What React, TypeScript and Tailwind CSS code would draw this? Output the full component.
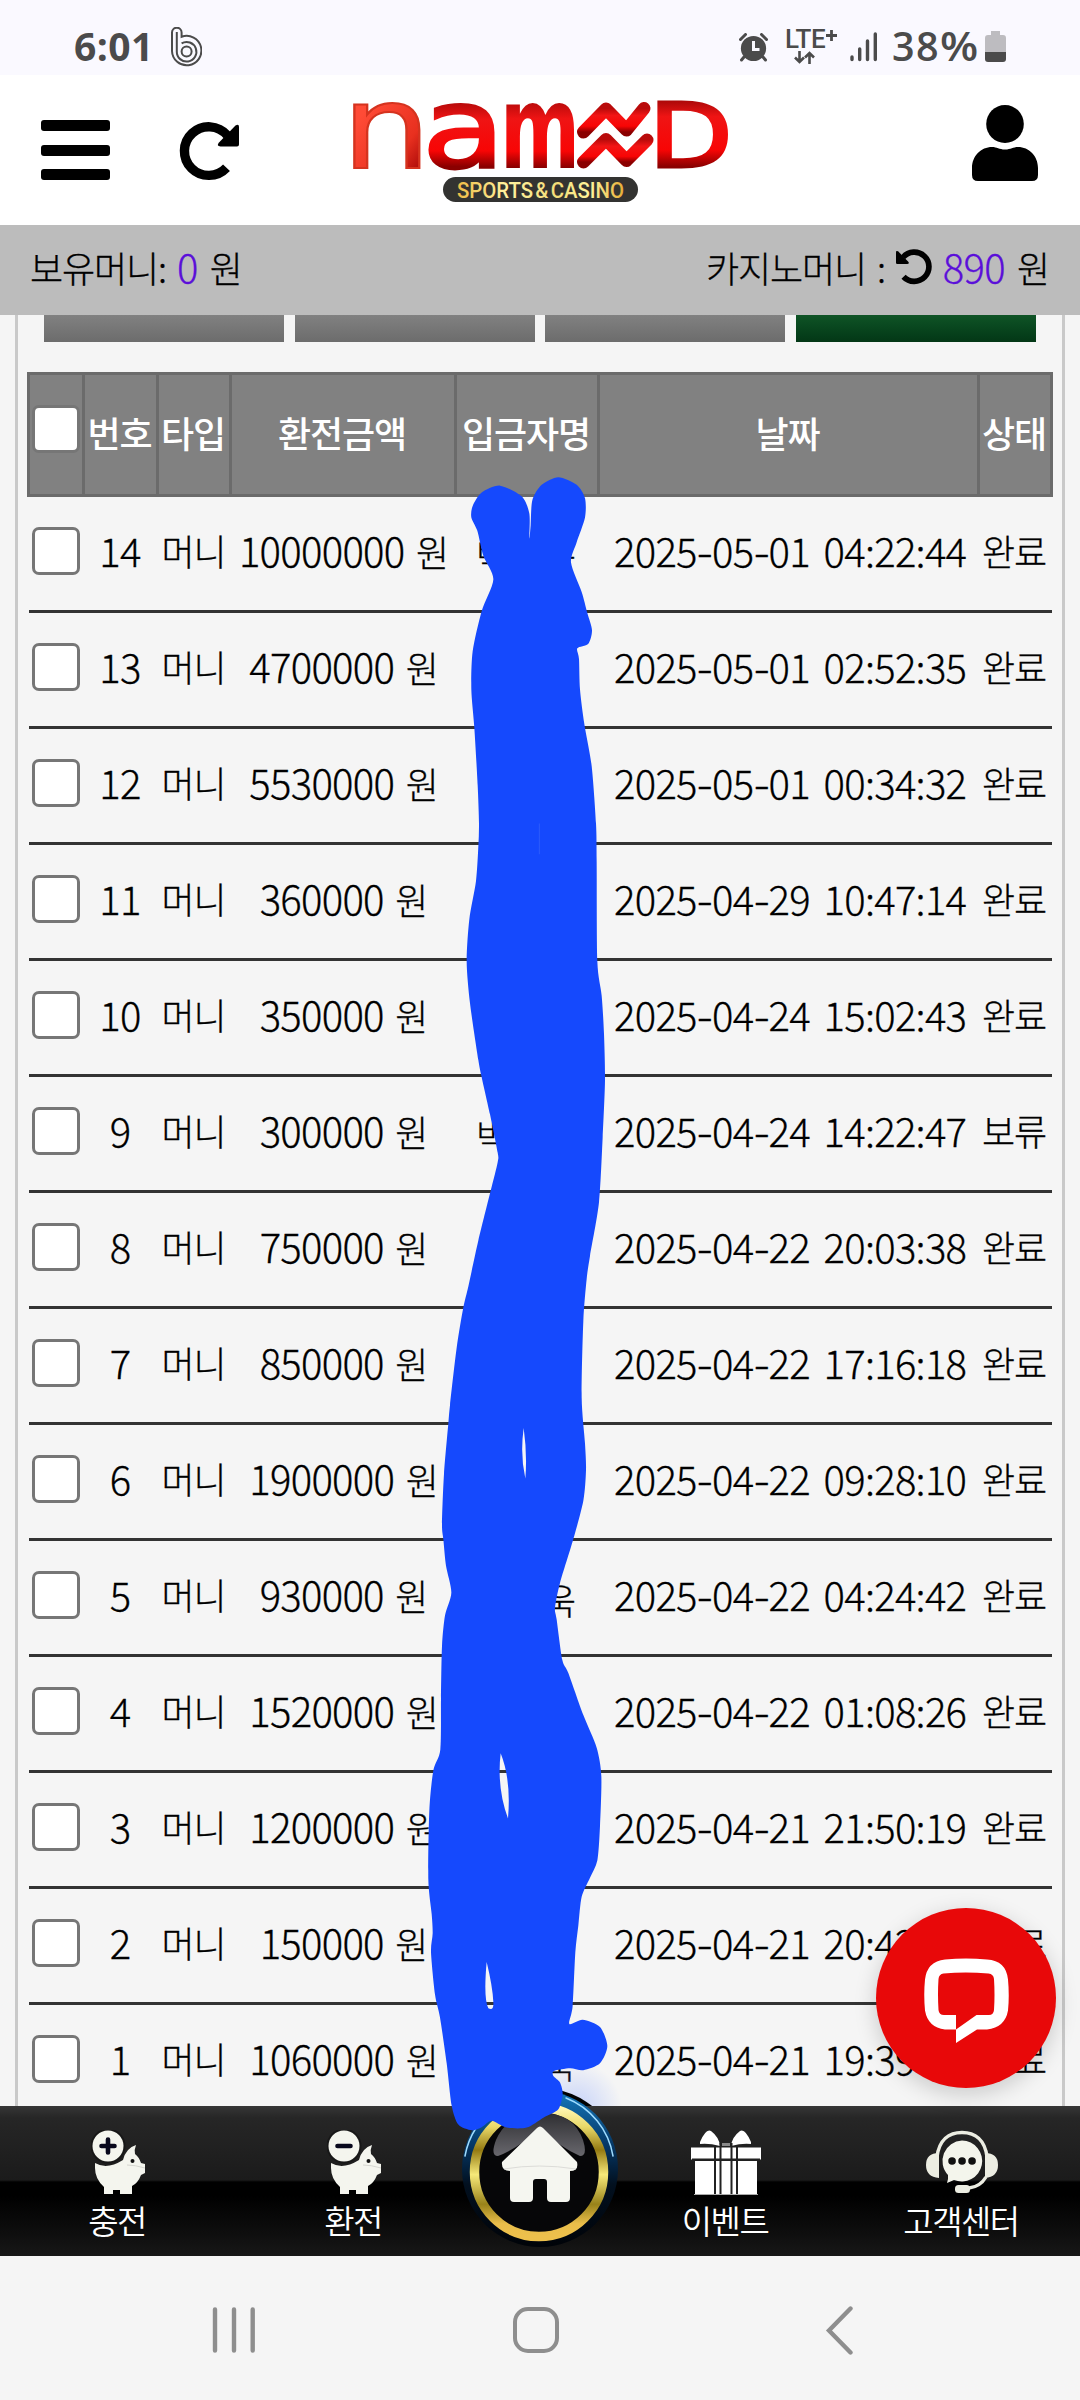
import React from "react";

const KR = "font-['Noto_Sans_CJK_KR',sans-serif]";

type Row = { no: number; amount: string; date: string; status: string; name?: boolean };

const rows: Row[] = [
  { no: 14, amount: "10000000", date: "2025-05-01 04:22:44", status: "완료", name: true },
  { no: 13, amount: "4700000", date: "2025-05-01 02:52:35", status: "완료" },
  { no: 12, amount: "5530000", date: "2025-05-01 00:34:32", status: "완료" },
  { no: 11, amount: "360000", date: "2025-04-29 10:47:14", status: "완료" },
  { no: 10, amount: "350000", date: "2025-04-24 15:02:43", status: "완료" },
  { no: 9, amount: "300000", date: "2025-04-24 14:22:47", status: "보류", name: true },
  { no: 8, amount: "750000", date: "2025-04-22 20:03:38", status: "완료" },
  { no: 7, amount: "850000", date: "2025-04-22 17:16:18", status: "완료" },
  { no: 6, amount: "1900000", date: "2025-04-22 09:28:10", status: "완료" },
  { no: 5, amount: "930000", date: "2025-04-22 04:24:42", status: "완료", name: true },
  { no: 4, amount: "1520000", date: "2025-04-22 01:08:26", status: "완료" },
  { no: 3, amount: "1200000", date: "2025-04-21 21:50:19", status: "완료" },
  { no: 2, amount: "150000", date: "2025-04-21 20:42", status: "완료" },
  { no: 1, amount: "1060000", date: "2025-04-21 19:39", status: "완료", name: true },
];

function Num({ children, className = "" }: { children: React.ReactNode; className?: string }) {
  return <span className={`text-[40px] tracking-[-0.7px] ${className}`}>{children}</span>;
}

function Ko({ children, className = "" }: { children: React.ReactNode; className?: string }) {
  return <span className={`text-[36px] tracking-[-1.1px] ${className}`}>{children}</span>;
}

// Dates have wide hyphens and a wide gap before the time.
function Stamp({ value }: { value: string }) {
  return (
    <Num className="[word-spacing:5.500px]">
      {value.split(/(-)/).map((part, i) =>
        part === "-" ? (
          <span key={i} className="mr-[1px] ml-[1.500px] inline-block origin-center scale-x-[1.2]">-</span>
        ) : (
          part
        ),
      )}
    </Num>
  );
}

function StatusBar() {
  return (
    <div className="flex h-[75px] items-start bg-[#faf9ff] pl-[74px] pr-[74px] pt-[26px] text-[#4b4b4b]">
      <span className="h-[40px] w-[80px] whitespace-nowrap font-['Open_Sans',sans-serif] text-[39px] font-bold leading-[40px] tracking-[0.4px]">6:01</span>
      <svg className="ml-[17px] mt-px" width="31" height="40" viewBox="0 0 31 40" fill="none" stroke="#4b4b4b" strokeWidth="2">
        <path d="M1 5.500a4.800 4.800 0 0 1 9.600 0v4.300A14.700 14.700 0 1 1 1 24Z" />
        <path d="M5.800 5v19.500a9.800 9.800 0 1 0 4.800-8.200" />
        <circle cx="15.600" cy="24.500" r="5" />
      </svg>
      <div className="ml-auto flex items-start">
        <svg className="mt-[7px]" width="29" height="29" viewBox="0 0 29 29">
          <circle cx="14.500" cy="15.500" r="12.600" fill="#4b4b4b" />
          <path d="M1.500 6.500 6.500 1.500M27.500 6.500l-5-5M5 24l-2.500 3M24 24l2.500 3" stroke="#4b4b4b" strokeWidth="3" strokeLinecap="round" />
          <path d="M14.500 8v8.500h6" fill="none" stroke="#faf9ff" strokeWidth="3" />
        </svg>
        <div className="ml-[17px] flex w-[56px] flex-col">
          <div className="flex h-[25px] items-start whitespace-nowrap font-['Roboto',sans-serif] font-medium">
            <span className="text-[26px] leading-[26px] tracking-[-0.4px]">LTE</span>
            <svg className="mt-[3px]" width="13" height="13" viewBox="0 0 13 13"><path d="M6.500 1v11M1 6.500h11" stroke="#4b4b4b" strokeWidth="2.800" /></svg>
          </div>
          <svg className="ml-[9px]" width="21" height="13" viewBox="0 0 21 13" fill="none" stroke="#4b4b4b" strokeWidth="2.600">
            <path d="M5.500 0v11M1 6.500l4.500 4.500L10 6.500M15.500 13V2M11 6.500 15.500 2l4.500 4.500" />
          </svg>
        </div>
        <svg className="ml-[9px] mt-[6px]" width="28" height="30" viewBox="0 0 28 30" stroke="#4b4b4b" strokeWidth="3.400" strokeLinecap="round">
          <path d="M2 25v2.500M9.700 17v10.500M17.500 9v18.500M25.300 2v25.500" />
        </svg>
        <span className="ml-[14px] h-[40px] w-[89px] whitespace-nowrap font-['Open_Sans',sans-serif] text-[39.500px] font-semibold leading-[40px] tracking-[1.500px]">
          38<span className="inline-block origin-left scale-x-[1.12]">%</span>
        </span>
        <svg className="ml-[4px] mt-[5px]" width="21" height="32" viewBox="0 0 21 32">
          <path d="M6 0h9v4h3a3 3 0 0 1 3 3v15H0V7a3 3 0 0 1 3-3h3Z" fill="#bdbcc0" />
          <path d="M0 21h21v7a3 3 0 0 1-3 3H3a3 3 0 0 1-3-3Z" fill="#4b4b4b" />
        </svg>
      </div>
    </div>
  );
}

function RotateIcon({ className = "" }: { className?: string }) {
  return (
    <svg className={className} viewBox="0 0 58 59">
      <path d="M46.200 13.300A24.300 24.300 0 1 0 45.500 45.700" fill="none" stroke="#000" strokeWidth="9.400" />
      <path d="M54.500 3.600Q58 1.500 58 5v17.500q0 2-2 2H39.500Q35 24 38 20.500Z" fill="#000" />
    </svg>
  );
}

function Logo() {
  return (
    <svg className="overflow-visible" width="376" height="106" viewBox="352 99 376 106">
      <defs>
        <linearGradient id="red" x1="0" y1="0" x2="0" y2="1">
          <stop offset="0" stopColor="#b90b0b" />
          <stop offset=".3" stopColor="#f31515" />
          <stop offset=".75" stopColor="#f80505" />
          <stop offset="1" stopColor="#8a0000" />
        </linearGradient>
        <linearGradient id="redText" gradientUnits="userSpaceOnUse" x1="0" y1="-67" x2="0" y2="0">
          <stop offset="0" stopColor="#b90b0b" />
          <stop offset=".25" stopColor="#ef1414" />
          <stop offset=".75" stopColor="#f80505" />
          <stop offset="1" stopColor="#8a0000" />
        </linearGradient>
        <linearGradient id="redTall" gradientUnits="userSpaceOnUse" x1="0" y1="-90" x2="0" y2="0">
          <stop offset="0" stopColor="#a80808" />
          <stop offset=".25" stopColor="#ef1414" />
          <stop offset=".75" stopColor="#f80505" />
          <stop offset="1" stopColor="#8a0000" />
        </linearGradient>
        <linearGradient id="firstRed" gradientUnits="userSpaceOnUse" x1="8" y1="-40" x2="70" y2="0">
          <stop offset="0" stopColor="#ff4b36" />
          <stop offset=".65" stopColor="#e8301f" />
          <stop offset="1" stopColor="#a80808" />
        </linearGradient>
        <linearGradient id="gold" x1="0" y1="0" x2="1" y2="0">
          <stop offset="0" stopColor="#eebb45" />
          <stop offset=".3" stopColor="#fff3a0" />
          <stop offset=".6" stopColor="#f3dd78" />
          <stop offset=".8" stopColor="#fff59c" />
          <stop offset="1" stopColor="#e6ad35" />
        </linearGradient>
      </defs>
      <g fontFamily="DejaVu Sans" fontSize="120" fontWeight="400" strokeWidth="2">
        <text transform="translate(341.500 167.500) scale(1.18 .97)" fill="url(#firstRed)" stroke="#d5331f">n</text>
        <text transform="translate(422 166.500) scale(1.13 .94)" fill="url(#redText)" stroke="url(#redText)" strokeWidth="3">a</text>
        <text transform="translate(500 167.500) scale(.64 .97)" fontWeight="700" fill="url(#redText)">m</text>
        <text transform="translate(648.500 166.500) scale(.91 .74)" fill="url(#redTall)" stroke="url(#redTall)" strokeWidth="4">D</text>
      </g>
      <path d="M583.500 132 606 109l20.500 21L644 108.500" fill="none" stroke="url(#red)" strokeWidth="13" strokeLinecap="round" strokeLinejoin="round" />
      <path d="M583.500 162 606 139.500l20.500 21L647 140" fill="none" stroke="url(#red)" strokeWidth="13" strokeLinecap="round" strokeLinejoin="round" />
      <rect x="443" y="177" width="195" height="25" rx="12.500" fill="#333331" />
      <text x="457" y="197.800" fontFamily="Roboto" fontSize="22.500" fontWeight="500" textLength="167" lengthAdjust="spacingAndGlyphs" wordSpacing="-3" fill="url(#gold)">SPORTS &amp; CASINO</text>
    </svg>
  );
}

function Header() {
  return (
    <header className="flex h-[150px] items-start bg-white pl-[41px] pr-[42px]">
      <div className="mt-[45px] flex w-[69px] flex-col gap-[13.500px]">
        <span className="h-[11px] rounded-[3px] bg-black" />
        <span className="h-[11px] rounded-[3px] bg-black" />
        <span className="h-[11px] rounded-[3px] bg-black" />
      </div>
      <RotateIcon className="ml-[71px] mt-[47px] h-[59px] w-[58px] overflow-visible" />
      <div className="ml-[113px] mt-[24px]"><Logo /></div>
      <svg className="ml-auto mt-[30px]" width="66" height="76" viewBox="0 0 66 76">
        <ellipse cx="33" cy="19" rx="18.800" ry="19" />
        <path d="M20 42c5 0 7 2.500 13 2.500S41 42 46 42c11 0 20 9 20 21v7q0 6-6 6H6q-6 0-6-6v-7C0 51 9 42 20 42Z" />
      </svg>
    </header>
  );
}

function BalanceBar() {
  return (
    <div className={`flex h-[90px] items-start justify-between whitespace-nowrap bg-[#bcbcbc] pl-[30px] pr-[31px] ${KR} font-light text-black [-webkit-text-stroke:0.3px]`}>
      <div className="flex items-baseline leading-[82px]">
        <Ko>보유머니:</Ko>
        <Num className="ml-[11px] text-[#5b0fd9]">0</Num>
        <Ko className="ml-[12px]">원</Ko>
      </div>
      <div className="flex items-baseline leading-[82px]">
        <Ko className="[word-spacing:4px]">카지노머니 :</Ko>
        <RotateIcon className="ml-[11px] mt-[1px] h-[36px] w-[35px] -scale-x-100 self-center overflow-visible" />
        <Num className="ml-[12px] text-[#5b0fd9]">890</Num>
        <Ko className="ml-[12px]">원</Ko>
      </div>
    </div>
  );
}

function Check() {
  return <span className="block h-[48px] w-[48px] rounded-[7px] border-[3px] border-[#767676] bg-white" />;
}

const grid = "grid grid-cols-[55px_74px_73px_225px_143px_380px_73px]";

function Table() {
  const heads = ["번호", "타입", "환전금액", "입금자명", "날짜", "상태"];
  return (
    <div className={`ml-[9px] mt-[30px] w-[1026px] whitespace-nowrap ${KR}`}>
      <div className={`${grid} h-[125px] w-[1026px] border-[3px] border-[#6b6b6b] bg-[#818181] text-white`}>
        <div className="flex justify-center border-r-[3px] border-[#6b6b6b] pt-[30px]"><Check /></div>
        {heads.map((h, i) => (
          <div key={h} className={`flex items-center justify-center pb-[6px] ${i < 5 ? "border-r-[3px] border-[#6b6b6b]" : "pr-[3px]"}`}>
            <Ko className="-ml-[2px] font-medium">{h}</Ko>
          </div>
        ))}
      </div>
      {rows.map((r) => (
        <div key={r.no} className={`${grid} ml-[2px] h-[116px] w-[1023px] items-center border-b-[3px] border-[#333] pt-[2px] font-light leading-[60px] text-black [-webkit-text-stroke:0.3px]`}>
          <div className="-mt-[7px] pl-[3px]"><Check /></div>
          <div className="pr-[2px] text-center"><Num>{r.no}</Num></div>
          <div className="pr-[2px] text-center"><Ko>머니</Ko></div>
          <div className="text-center"><Num>{r.amount}</Num><Ko className="ml-[11.500px]">원</Ko></div>
          <div>
            {r.name && (
              <div className="ml-[20px] flex w-[99px] justify-between"><Ko>박</Ko><Ko>욱</Ko></div>
            )}
          </div>
          <div className="pl-[15px]"><Stamp value={r.date} /></div>
          <div className="pr-[3px] text-center"><Ko>{r.status}</Ko></div>
        </div>
      ))}
    </div>
  );
}

// Brush outline, x in thirds of a pixel and y in 1568/600 of a pixel.
const brush: [number, number][] = [
  [300, 67], [245, 85], [218, 120], [214, 150], [232, 185], [250, 250], [280, 312], [245, 395], [218, 500], [214, 600], [223, 700],
  [233, 850], [237, 950], [235, 1010], [228, 1100], [208, 1200], [200, 1310], [210, 1420], [235, 1568], [245, 1613],
  [270, 1710], [293, 1810], [293, 1835], [272, 1910], [235, 2040], [205, 2160], [190, 2215], [170, 2320], [150, 2470],
  [145, 2518], [132, 2650], [126, 2780], [130, 2820], [138, 2890], [154, 2960], [135, 3020], [126, 3100], [123, 3236],
  [121, 3370], [100, 3425], [88, 3530], [85, 3710], [95, 3800], [98, 3850], [93, 3900], [105, 4010], [120, 4070],
  [140, 4190], [155, 4300], [175, 4350], [215, 4365], [245, 4357], [275, 4340], [320, 4358], [380, 4358], [430, 4332],
  [475, 4310], [488, 4270], [480, 4240], [460, 4223], [462, 4210], [510, 4203], [550, 4208], [600, 4190], [622, 4145],
  [600, 4095], [548, 4076], [508, 4087], [518, 4040], [526, 3900], [535, 3830], [545, 3755], [570, 3705], [592, 3660],
  [600, 3570], [604, 3440], [590, 3365], [550, 3280], [505, 3170], [487, 3136], [470, 3030], [465, 3000], [480, 2935],
  [520, 2820], [550, 2720], [558, 2640], [555, 2570], [545, 2450], [550, 2250], [560, 2140], [570, 2080], [597, 1940],
  [608, 1770], [615, 1620], [612, 1500], [605, 1400], [592, 1310], [590, 1050], [588, 950], [575, 800], [553, 690],
  [540, 600], [537, 520], [532, 492], [565, 480], [576, 445], [562, 400], [545, 345], [513, 268], [530, 215], [555, 150],
  [555, 100], [530, 65], [475, 45], [425, 65], [397, 105], [392, 170], [388, 205], [388, 140], [365, 95],
];

function smooth(pts: [number, number][]) {
  const n = pts.length;
  const k = 0.13;
  let d = `M${pts[0][0]} ${pts[0][1]}`;
  for (let i = 0; i < n; i++) {
    const p0 = pts[(i + n - 1) % n], p1 = pts[i], p2 = pts[(i + 1) % n], p3 = pts[(i + 2) % n];
    d += `C${p1[0] + (p2[0] - p0[0]) * k} ${p1[1] + (p2[1] - p0[1]) * k} ${p2[0] - (p3[0] - p1[0]) * k} ${p2[1] - (p3[1] - p1[1]) * k} ${p2[0]} ${p2[1]}`;
  }
  return d + "Z";
}

function BrushStroke() {
  return (
    <svg className="pointer-events-none absolute left-[400px] top-[460px] z-30" width="240" height="1800" viewBox="0 0 720 4704" preserveAspectRatio="none">
      <path
        fill="#1549fd"
        fillRule="evenodd"
        d={
          smooth(brush) +
          "M302 3380Q290 3470 324 3550Q334 3450 302 3380Z" +
          "M260 3925Q250 4020 265 4046Q282 4054 280 4030Q278 3990 260 3925Z" +
          "M371 2530Q360 2600 376 2662Q382 2600 371 2530Z"
        }
      />
      <path d="M418 950V1030" stroke="#2d5cfc" strokeWidth="3" />
    </svg>
  );
}

function Piggy({ minus = false }: { minus?: boolean }) {
  return (
    <svg width="54" height="66" viewBox="0 0 54 66" fill="#f4f5ee">
      <path d="M4 33Q16 40 32 30Q35 18 45 15Q43 20 44 24Q48 27 50 33L54 34V43L50 45Q47 53 41 56V64H29V60H22V64H13V57Q4 49 4 38Z" />
      <circle cx="41.500" cy="31" r="2" fill="#111" />
      <path d="M36 35Q44 35 54 38" stroke="#d5d6d0" fill="none" />
      <circle cx="17" cy="16" r="17.500" fill="#171717" />
      <circle cx="17" cy="16" r="15.500" />
      <path d={minus ? "M10.500 16h13" : "M10.500 16h13M17 9.500v13"} stroke="#08081c" strokeWidth="4.600" strokeLinecap="round" />
    </svg>
  );
}

function Gift() {
  return (
    <svg width="70" height="66" viewBox="0 0 70 66" fill="#fff">
      <path d="M9 12Q15-2 20 1Q28 7 29 16Q18 13 9 14Z" />
      <path d="M60 12Q54-2 49 1Q41 7 40 16Q51 13 60 14Z" />
      <path d="M0 17.500h70v12H0Z" />
      <path d="M4 31h62v33H4Z" />
      <path d="M1 29.500h68M24 17v47M46 17v47M29.500 13v51M40.500 13v51M30 12.500h10" stroke="#222" strokeWidth="2" />
      <path d="M3 64.500h64" stroke="#aaa" strokeWidth="1" />
      <rect x="31" y="13" width="8" height="3" fill="#888" />
    </svg>
  );
}

function Headset() {
  return (
    <svg width="72" height="66" viewBox="0 0 72 66" fill="#ecede2">
      <path d="M11 27C13 10 23 2.500 36 2.500S59 10 61 27" fill="none" stroke="#ecede2" strokeWidth="3.400" />
      <path d="M13 23v25Q0 47 0 35T13 23ZM59 23v25Q72 47 72 35T59 23Z" />
      <path d="M60 47Q54 57 43 58" fill="none" stroke="#ecede2" strokeWidth="3.400" />
      <rect x="29" y="55" width="15" height="8" rx="3.500" />
      <path d="M36 10.500a20.500 20.500 0 1 1-8 39.500L21 53q1.500-5 1-8A20.500 20.500 0 0 1 36 10.500Z" fill="#f4f5ec" />
      <path d="M26 31h.1M36 31h.1M46 31h.1" stroke="#111" strokeWidth="7.500" strokeLinecap="round" />
    </svg>
  );
}

function HomeButton() {
  return (
    <svg className="absolute left-[440px] top-[2060px] z-20" width="200" height="200" viewBox="440 2060 200 200">
      <defs>
        <linearGradient id="rim" x1="0" y1="0" x2="0" y2="1">
          <stop offset="0" stopColor="#1478bd" />
          <stop offset=".35" stopColor="#053765" />
          <stop offset=".6" stopColor="#02101f" />
          <stop offset="1" stopColor="#000308" />
        </linearGradient>
        <linearGradient id="ring" x1="0" y1="0" x2="0" y2="1">
          <stop offset="0" stopColor="#fff7b4" />
          <stop offset=".15" stopColor="#e9d968" />
          <stop offset=".33" stopColor="#947a12" />
          <stop offset=".52" stopColor="#f6e979" />
          <stop offset=".75" stopColor="#98821a" />
          <stop offset=".9" stopColor="#e9bd4a" />
          <stop offset="1" stopColor="#edc04c" />
        </linearGradient>
        <linearGradient id="gloss" x1="0" y1="0" x2="0" y2="1">
          <stop offset="0" stopColor="#2e2e31" />
          <stop offset="1" stopColor="#68676d" />
        </linearGradient>
        <radialGradient id="glow">
          <stop offset="0" stopColor="#7e9dff" stopOpacity=".4" />
          <stop offset="1" stopColor="#7e9dff" stopOpacity="0" />
        </radialGradient>
        <clipPath id="aboveBar"><rect x="440" y="2060" width="200" height="46" /></clipPath>
      </defs>
      <g clipPath="url(#aboveBar)">
        <circle cx="576" cy="2108" r="46" fill="url(#glow)" />
        <circle cx="539" cy="2173" r="85.500" fill="#020202" />
      </g>
      <circle cx="540" cy="2169" r="78" fill="url(#rim)" />
      <path d="M465 2156A76 76 0 0 1 476 2128M566 2098A76 76 0 0 1 613 2156" fill="none" stroke="#9edcff" strokeWidth="1.500" strokeLinecap="round" />
      <circle cx="539" cy="2172" r="64.500" fill="#060608" stroke="url(#ring)" strokeWidth="9.500" />
      <path d="M498 2156Q490 2156 496 2140Q507 2114 540 2113T583 2140Q588 2156 580 2156Q561 2148 540 2128Q519 2148 498 2156Z" fill="url(#gloss)" />
      <path d="M537 2128q3-3 6 0l34 34q2 9-7 9v27q0 4-4 4h-15q-4 0-4-4v-16q0-3-3-3h-8q-3 0-3 3v16q0 4-4 4h-15q-4 0-4-4v-27q-9 0-8-9Z" fill="#f5f6f0" />
      <path d="M504 2169Q539 2163 576 2169" stroke="#dcdcd8" fill="none" />
    </svg>
  );
}

function NavItem({ label, icon }: { label: string; icon: React.ReactNode }) {
  return (
    <div className="flex w-[236px] flex-col items-center pt-[24px]">
      <div className="h-[66px]">{icon}</div>
      <span className="mt-[4px] pr-[2px] text-[33px] leading-[40px] tracking-[-1.500px]">{label}</span>
    </div>
  );
}

export default function App() {
  return (
    <div className="relative flex h-[2400px] w-[1080px] flex-col overflow-hidden bg-[#f5f5f5]">
      <StatusBar />
      <Header />
      <BalanceBar />
      <main className="h-[1791px] overflow-hidden px-[15px]">
        <div className="h-[1791px] border-x-[3px] border-[#c9c9c9]">
          <div className="grid h-[27px] w-[992px] grid-cols-4 gap-[10.700px] ml-[26px]">
            <div className="bg-linear-to-b from-[#818181] to-[#6c6c6c]" />
            <div className="bg-linear-to-b from-[#818181] to-[#6c6c6c]" />
            <div className="bg-linear-to-b from-[#818181] to-[#6c6c6c]" />
            <div className="bg-linear-to-b from-[#0f5426] to-[#033716]" />
          </div>
          <Table />
        </div>
      </main>
      <nav className={`flex h-[150px] justify-between bg-[linear-gradient(to_bottom,#363636_0,#262626_12px,#1b1b1b_74px,#000_76px,#000_90px,#171717_150px)] ${KR} font-[350] text-white`}>
        <NavItem label="충전" icon={<Piggy />} />
        <NavItem label="환전" icon={<Piggy minus />} />
        <div className="w-[136px]" />
        <NavItem label="이벤트" icon={<Gift />} />
        <NavItem label="고객센터" icon={<Headset />} />
      </nav>
      <div className="flex h-[144px] items-start bg-[#f5f5f5] pl-[212px] pt-[50px]">
        <svg width="44" height="48" viewBox="0 0 44 48" stroke="#8e8e8e" strokeWidth="4.400" strokeLinecap="round"><path d="M3 3.500v41M22 3.500v41M40.700 3.500v41" /></svg>
        <span className="ml-[257px] mt-px h-[46px] w-[46px] rounded-[15px] border-4 border-[#8e8e8e]" />
        <svg className="ml-[265px]" width="30" height="50" viewBox="0 0 30 50" fill="none" stroke="#8e8e8e" strokeWidth="4.400" strokeLinecap="round"><path d="M26.500 2.500 5 24.500l21.500 22" /></svg>
      </div>
      <HomeButton />
      <BrushStroke />
      <div className="absolute left-[876px] top-[1908px] z-20 h-[180px] w-[180px] rounded-full bg-[#e80809] shadow-[0_6px_22px_rgba(0,0,0,0.18)]">
        <svg width="180" height="180" viewBox="0 0 180 180">
          <path fillRule="evenodd" fill="#fff" d="M69 51.500q21-2 42 0q19 1 21 20q1.500 16 0 31q-3 17-21 19h-10L80 135V107H68q-5 0-5.500-5q-1-16 0-31q.5-5 5-5.500q22-2 45 0q5 .5 5.500 5.500q1 16 0 31q-.5 5-5 5H100.500L80 121.500H69q-17-2-20-19q-1.500-16 0-31q2-18 20-20Z" />
        </svg>
      </div>
    </div>
  );
}
